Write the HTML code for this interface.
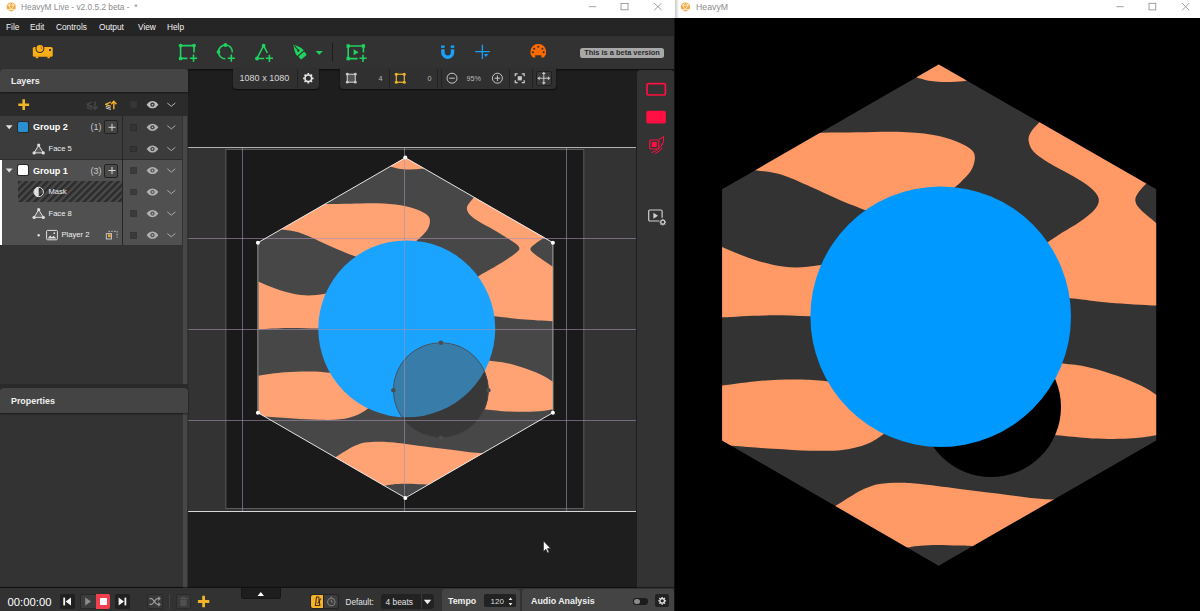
<!DOCTYPE html>
<html><head><meta charset="utf-8"><title>HeavyM</title>
<style>
*{box-sizing:border-box;margin:0;padding:0}
html,body{width:1200px;height:611px;overflow:hidden;background:#000;font-family:"Liberation Sans",sans-serif;font-size:9px;color:#e8e8e8}
.abs{position:absolute}
#left{position:absolute;left:0;top:0;width:675px;height:611px;background:#1e1e1e;overflow:hidden}
#right{position:absolute;left:675px;top:0;width:525px;height:611px;background:#000;overflow:hidden}
.titlebar{position:absolute;left:0;top:0;right:0;height:18px;background:#fff;color:#8c8c8c;font-size:9.5px;line-height:14px}
.menubar{position:absolute;left:0;top:18px;width:675px;height:18px;background:#252525;color:#f2f2f2;font-size:8.3px;line-height:18px}
.menubar span{position:absolute;top:0px}
.toolbar{position:absolute;left:0;top:36px;width:675px;height:33px;background:#323232;box-shadow:0 1px 2px rgba(0,0,0,.6)}
.panelhead{position:absolute;left:0;background:#444;border-radius:4px 4px 0 0;color:#f0f0f0;font-weight:bold;font-size:8.9px;width:188px;height:23px;line-height:24.5px;padding-left:11px;box-shadow:0 1px 2px rgba(0,0,0,.5)}
.t{position:absolute;white-space:nowrap;line-height:12px}
.b{font-weight:bold}
.nx{transform:scaleX(0.9);transform-origin:0 50%}
.row{position:absolute;left:0;width:182px}
.cb{position:absolute;width:6.9px;height:6.9px;background:#343434;border:1px solid #2d2d2d;left:130.1px}
.addb{position:absolute;left:104.2px;width:14.2px;height:14.2px;background:#444;border:1px solid #222;border-radius:2px}
.btn{position:absolute;border-radius:2px}
</style></head><body>
<div id="left">
  <div class="abs" id="canvas" style="left:188px;top:69px;width:448px;height:518px;background:#1e1e1e"></div>

<svg class="abs" style="left:0;top:0" width="675" height="611" viewBox="0 0 675 611">
  <defs>
    <clipPath id="hexc"><polygon points="938.7,64.5 1156.2,189.3 1156.2,440.5 938.7,565.8 722.1,440.5 722.1,189.3"/></clipPath>
    <clipPath id="bluec"><circle cx="940.7" cy="316.7" r="130.3"/></clipPath>
    <g id="art">
      <polygon points="938.7,64.5 1156.2,189.3 1156.2,440.5 938.7,565.8 722.1,440.5 722.1,189.3" fill="#333"/>
      <g clip-path="url(#hexc)" fill="#ff9966">
<path d="M900,50 L916.7,77.5 C918.8,78.0 924.8,80.1 929.0,80.8 C933.2,81.5 937.4,81.7 941.7,81.9 C946.0,82.1 950.8,82.0 955.0,81.8 C959.2,81.6 964.8,80.9 966.8,80.7 L990,50 Z"/>
<path d="M740,150 L740.0,168.5 C742.8,168.8 750.2,169.4 757.0,170.4 C763.8,171.4 772.1,171.9 781.0,174.6 C789.9,177.3 801.1,182.7 810.5,186.8 C819.9,190.9 828.7,195.3 837.5,199.1 C846.3,202.9 852.9,205.6 863.3,209.4 C873.7,213.2 893.9,219.9 900.0,222.0 L940.0,200.0 C942.5,197.8 951.6,190.1 955.2,187.0 C958.8,183.9 958.7,184.2 961.4,181.4 C964.1,178.6 969.0,174.2 971.2,170.3 C973.5,166.4 974.9,161.6 974.9,158.1 C974.9,154.6 974.3,152.3 971.2,149.5 C968.1,146.7 963.0,143.9 956.5,141.4 C950.0,138.9 941.7,136.3 931.9,134.7 C922.1,133.1 909.8,132.2 897.5,131.8 C885.2,131.4 870.9,132.1 858.2,132.3 C845.5,132.5 832.8,132.6 821.4,132.8 C810.0,133.0 795.2,133.4 790.0,133.5 Z"/>
<path d="M700,236 L700.0,236.0 C703.7,237.8 713.9,243.3 722.1,247.0 C730.3,250.7 740.4,255.0 749.0,258.0 C757.6,261.0 765.9,263.4 773.7,265.0 C781.5,266.6 788.0,267.4 795.8,267.4 C803.6,267.4 811.3,266.6 820.3,265.0 C829.3,263.4 845.0,259.2 850.0,258.0 L850.0,318.0 C843.3,317.7 824.0,316.7 810.0,316.3 C796.0,315.9 780.9,315.2 766.3,315.4 C751.6,315.6 733.1,316.8 722.1,317.3 C711.1,317.8 703.7,318.3 700.0,318.5 Z"/>
<path d="M700,388.5 L700.0,388.5 C703.7,388.0 711.9,386.9 722.1,385.6 C732.3,384.3 748.7,381.7 761.4,380.7 C774.1,379.7 787.4,379.4 798.2,379.5 C809.1,379.6 816.2,380.3 826.5,381.2 C836.8,382.1 854.4,384.4 860.0,385.0 L900.0,420.0 C897.2,422.4 888.5,430.5 883.0,434.5 C877.5,438.5 873.8,441.3 867.0,443.9 C860.2,446.5 851.8,448.9 842.4,450.0 C833.0,451.1 822.0,450.9 810.5,450.7 C799.0,450.5 786.8,449.6 773.7,448.8 C760.6,448.0 744.2,446.8 731.9,445.8 C719.6,444.8 705.3,443.5 700.0,443.0 Z"/>
<path d="M820,516 L820.0,516.0 C822.6,514.3 830.2,509.1 835.6,505.7 C841.0,502.3 847.4,498.2 852.3,495.4 C857.2,492.5 860.5,490.5 865.0,488.6 C869.5,486.7 873.6,485.1 879.3,484.1 C884.9,483.1 892.3,482.9 898.9,482.8 C905.5,482.8 908.8,482.8 918.6,483.8 C928.4,484.8 944.8,487.1 957.9,488.7 C971.0,490.3 985.1,492.1 997.2,493.6 C1009.3,495.1 1021.1,496.9 1030.5,497.9 C1039.9,498.9 1046.4,499.1 1053.8,499.6 C1061.2,500.1 1071.5,500.8 1075.0,501.0 L1000,560 L1000.0,547.5 C995.6,547.3 980.6,546.5 973.6,546.2 C966.6,545.9 963.8,545.8 957.9,545.6 C952.0,545.4 944.5,545.0 938.2,545.0 C931.9,545.0 925.1,545.4 920.0,545.8 C914.9,546.2 914.5,546.4 907.8,547.6 C901.1,548.8 884.6,552.1 880.0,553.0 Z"/>
<path d="M1040,362 L1040.0,362.0 C1043.8,362.3 1054.8,362.7 1062.9,363.6 C1071.0,364.5 1079.2,365.1 1088.4,367.2 C1097.6,369.3 1109.1,372.9 1117.9,376.0 C1126.8,379.1 1135.1,382.7 1141.5,385.8 C1147.9,388.9 1150.6,391.2 1156.2,394.7 C1161.8,398.2 1171.9,404.9 1175.0,407.0 L1175.0,430.5 C1171.9,431.3 1163.9,433.8 1156.2,435.2 C1148.5,436.6 1139.4,438.1 1128.7,438.6 C1118.0,439.1 1103.9,438.9 1091.9,438.4 C1080.0,437.8 1065.7,436.0 1057.0,435.3 C1048.3,434.6 1042.8,434.2 1040.0,434.0 Z"/>
      </g>
    </g>
    <pattern id="hatch" width="5" height="5" patternUnits="userSpaceOnUse" patternTransform="rotate(-45)"><rect width="5" height="5" fill="#4a4a4a"/><rect width="5" height="2.6" fill="#2c2c2c"/></pattern>
  </defs>
  <!-- stage band -->
  <rect x="188.2" y="148" width="447.8" height="363" fill="#333"/>
  <rect x="225.8" y="149.5" width="358" height="359" fill="#1a1a1a" stroke="#5a5a5a" stroke-width="1"/>
  <rect x="188.2" y="147" width="447.8" height="1" fill="#b0b0b0"/>
  <rect x="188.2" y="511" width="447.8" height="1" fill="#d8d8d8"/>
  <g transform="translate(405.4,327.8) scale(0.679) translate(-938.7,-315.15)">
    <use href="#art"/>
    <path d="M1050,110 L1050.0,110.0 C1048.2,112.2 1042.2,119.5 1039.1,123.5 C1036.0,127.5 1032.8,130.8 1031.2,133.7 C1029.6,136.6 1028.9,138.3 1029.4,140.9 C1029.9,143.5 1031.3,146.3 1034.3,149.3 C1037.3,152.3 1041.7,155.4 1047.5,159.0 C1053.3,162.6 1062.0,166.8 1069.2,171.0 C1076.5,175.2 1085.3,180.6 1091.0,184.2 C1096.7,187.8 1100.5,190.4 1103.1,192.8 C1105.7,195.2 1106.8,196.8 1106.6,198.8 C1106.4,200.8 1105.1,202.0 1101.7,204.8 C1098.3,207.6 1092.7,211.4 1086.1,215.6 C1079.5,219.8 1068.4,226.4 1062.0,230.2 C1055.6,234.0 1057.8,232.3 1047.5,238.6 C1037.2,244.9 1007.9,263.1 1000.0,268.0 L1000.0,293.0 C1011.6,293.9 1051.3,296.6 1069.6,298.2 C1087.9,299.8 1095.1,301.5 1109.6,302.7 C1124.0,303.9 1144.6,305.0 1156.3,305.6 C1168.0,306.2 1176.0,306.4 1180.0,306.5 L1180.0,243.0 C1176.0,240.1 1162.7,230.1 1156.3,225.5 C1149.9,220.9 1146.2,218.8 1141.6,215.6 C1136.9,212.3 1131.5,208.8 1128.4,206.0 C1125.3,203.2 1122.6,201.2 1122.8,198.8 C1123.0,196.4 1126.3,194.2 1129.6,191.6 C1132.9,189.0 1137.7,186.3 1142.8,183.0 C1147.9,179.7 1157.1,173.8 1160.0,172.0 L1100,100 Z" fill="#ff9966" clip-path="url(#hexc)"/>
    <circle cx="991" cy="407" r="70" fill="#1a1a1a"/>
    <circle cx="940.7" cy="316.7" r="130.3" fill="#0099ff"/>
    <polygon points="938.7,64.5 1156.2,189.3 1156.2,440.5 938.7,565.8 722.1,440.5 722.1,189.3" fill="#fff" fill-opacity="0.1"/>
    <circle cx="991" cy="407" r="70" fill="#383838"/>
    <circle cx="991" cy="407" r="70" fill="#387caa" clip-path="url(#bluec)"/>
    <circle cx="991" cy="407" r="70" fill="none" stroke="#4a4a4a" stroke-width="1"/>
    <g fill="#4c4c4c"><circle cx="991" cy="337" r="3.3"/><circle cx="991" cy="477" r="3.3"/><circle cx="921" cy="407" r="3.3"/><circle cx="1061" cy="407" r="3.3"/></g>
  </g>
  <!-- guides -->
  <g fill="#a48fb0" fill-opacity="0.6">
    <rect x="188.2" y="238" width="447.8" height="1"/><rect x="188.2" y="329" width="447.8" height="1"/><rect x="188.2" y="420" width="447.8" height="1"/>
    <rect x="242" y="148" width="1" height="363"/><rect x="404" y="148" width="1" height="363"/><rect x="566" y="148" width="1" height="363"/>
  </g>
  <!-- hexagon outline -->
  <path d="M257.9,242.7 L405.4,157.7 L552.9,242.7 M552.9,412.7 L405.4,497.9 L257.9,412.7" fill="none" stroke="#ececec" stroke-width="0.95"/>
  <path d="M552.9,242.7 V412.7 M257.9,242.7 V412.7" fill="none" stroke="#a0a0a0" stroke-width="1"/>
  <g fill="#fff"><circle cx="405.3" cy="157.5" r="2"/><circle cx="552.9" cy="242.7" r="2"/><circle cx="552.9" cy="412.7" r="2"/><circle cx="405.3" cy="497.9" r="2"/><circle cx="257.9" cy="412.7" r="2"/><circle cx="257.9" cy="242.7" r="2"/></g>
  <!-- cursor -->
  <path d="M543.5,541 l0,10.5 l2.4,-2.3 l1.7,3.8 l1.5,-0.7 l-1.7,-3.7 l3.3,0 Z" fill="#fff" stroke="#222" stroke-width="0.6"/>
</svg>

  <div class="titlebar"><span class="t" style="left:21px;top:0.8px;transform:scaleX(0.875);transform-origin:0 0">HeavyM Live - v2.0.5.2 beta -&nbsp; *</span></div>
  <div class="menubar"><span style="left:6px">File</span><span style="left:30px">Edit</span><span style="left:56px">Controls</span><span style="left:99px">Output</span><span style="left:138px">View</span><span style="left:167px">Help</span></div>
  <div class="toolbar"></div>
  <div class="abs" style="left:580px;top:47.5px;width:84px;height:10.5px;background:#a8a8a8;border-radius:2.5px;color:#2a2a2a;font-weight:bold;font-size:7.45px;line-height:10.5px;text-align:center;white-space:nowrap">This is a beta version</div>
  <!-- canvas tool boxes -->
  <div class="abs" style="left:232.5px;top:68px;width:86px;height:20.5px;background:#303030;border-radius:0 0 4px 4px;box-shadow:0 1px 2px rgba(0,0,0,.6)"></div>
  <div class="abs" style="left:297px;top:69px;width:1px;height:19px;background:#222"></div>
  <span class="t" style="left:239.5px;top:72px;color:#d8d8d8;font-size:9.05px">1080 x 1080</span>
  <div class="abs" style="left:340px;top:68px;width:216px;height:20.5px;background:#303030;border-radius:0 0 4px 4px;box-shadow:0 1px 2px rgba(0,0,0,.6)"></div>
  <div class="abs" style="left:389px;top:69px;width:1px;height:19px;background:#222"></div>
  <div class="abs" style="left:437px;top:69px;width:1px;height:19px;background:#222"></div>
  <div class="abs" style="left:441px;top:69px;width:1px;height:19px;background:#222"></div>
  <div class="abs" style="left:508.5px;top:69px;width:1px;height:19px;background:#222"></div>
  <div class="abs" style="left:531.5px;top:69px;width:1px;height:19px;background:#222"></div>
  <div class="abs" style="left:536px;top:70.5px;width:15.5px;height:15.5px;background:#3a3a3a;border:1px solid #202020;border-radius:2px"></div>
  <span class="t" style="left:378.5px;top:73px;color:#bbb;font-size:7.2px">4</span>
  <span class="t" style="left:427.5px;top:73px;color:#bbb;font-size:7.2px">0</span>
  <span class="t" style="left:466.5px;top:73px;color:#bbb;font-size:7.2px">95%</span>
  <!-- left panel -->
  <div class="abs" style="left:0;top:69px;width:188px;height:518px;background:#333"></div>
  <div class="abs" style="left:183px;top:116px;width:4.2px;height:268px;background:#474747"></div>
  <div class="abs" style="left:0;top:384px;width:188px;height:4.5px;background:#2a2a2a"></div>
  <div class="abs" style="left:183px;top:412.7px;width:4.2px;height:175px;background:#474747"></div>
  <div class="row" style="top:92px;height:24.3px;width:188px;background:#2b2b2b"></div>
  <div class="row" style="top:116.3px;height:43.2px;background:#3c3c3c"></div>
  <div class="row" style="top:159.6px;height:85.6px;background:#505050"></div>
  <div class="abs" style="left:0;top:159.6px;width:2.2px;height:85.6px;background:#fff"></div>
  <div class="abs" style="left:0;top:159.1px;width:182px;height:1px;background:#2c2c2c"></div>
  <div class="abs" style="left:122px;top:116.3px;width:1px;height:129px;background:#262626"></div>
  <div class="panelhead" style="top:69px">Layers</div>
  <div class="panelhead" style="top:388.3px;height:24.4px;line-height:27px">Properties</div>
  <div class="addb" style="top:120.3px"></div>
  <div class="addb" style="top:163.5px;background:#4a4a4a"></div>
  <div class="cb" style="top:101px;background:#363636;border-color:#333"></div>
  <div class="cb" style="top:123.8px"></div><div class="cb" style="top:145.5px"></div>
  <div class="cb" style="top:167px;background:#3b3b3b;border-color:#383838"></div><div class="cb" style="top:188.5px;background:#3b3b3b;border-color:#383838"></div><div class="cb" style="top:210px;background:#3b3b3b;border-color:#383838"></div><div class="cb" style="top:231.7px;background:#3b3b3b;border-color:#383838"></div>
  <div class="abs" style="left:17.8px;top:122px;width:10.4px;height:10px;background:#2a8fd0;border-radius:1.5px;box-shadow:0 0 0 1px #2a2a2a"></div>
  <div class="abs" style="left:17.8px;top:165.3px;width:10.4px;height:10px;background:#fff;border-radius:1.5px;box-shadow:0 0 0 1px #2a2a2a"></div>
  <span class="t b" style="left:33px;top:121.3px;color:#fff;font-size:9.1px">Group 2</span>
  <span class="t" style="left:90.5px;top:121.3px;color:#c8c8c8;font-size:9px">(1)</span>
  <span class="t" style="left:48.5px;top:143px;color:#f0f0f0;font-size:7.6px">Face 5</span>
  <span class="t b" style="left:33px;top:164.5px;color:#fff;font-size:9.1px">Group 1</span>
  <span class="t" style="left:90.5px;top:164.5px;color:#c8c8c8;font-size:9px">(3)</span>
  <svg class="abs" style="left:18px;top:180.8px" width="104" height="21.6"><rect width="104" height="21.6" fill="url(#hatch)"/><rect y="21" width="104" height="0.8" fill="#2a2a2a"/></svg>
  <span class="t" style="left:48.5px;top:186px;color:#f0f0f0;font-size:7.6px">Mask</span>
  <span class="t" style="left:48.5px;top:207.6px;color:#f0f0f0;font-size:7.6px">Face 8</span>
  <span class="t" style="left:61.5px;top:229.2px;color:#f0f0f0;font-size:7.6px">Player 2</span>
  <!-- right strip -->
  <div class="abs" style="left:636.6px;top:69.6px;width:37.4px;height:518px;background:#333;border-radius:4px 4px 0 0"></div>
  <!-- bottom bar -->
  <div class="abs" style="left:0;top:587.6px;width:675px;height:24px;background:#323232;box-shadow:0 -1px 1px rgba(0,0,0,.45)"></div>
  <div class="abs" style="left:241px;top:587.6px;width:40px;height:11.2px;background:#1e1e1e;border-radius:0 0 3px 3px;border:1px solid #161616;border-top:none"></div>
  <div class="abs" style="left:442px;top:589px;width:78px;height:22px;background:#444;border-radius:3px 3px 0 0"></div>
  <div class="abs" style="left:521.5px;top:589px;width:152.3px;height:22px;background:#444;border-radius:3px 3px 0 0"></div>
  <span class="t" style="left:7.5px;top:595.5px;color:#fff;font-size:11.3px">00:00:00</span>
  <div class="btn" style="left:59.5px;top:594px;width:15px;height:15px;background:#202020"></div>
  <div class="btn" style="left:79.5px;top:594px;width:16.5px;height:15px;background:#3c3c3c;border-radius:2px 0 0 2px;border:1px solid #282828;border-right:none"></div>
  <div class="btn" style="left:96px;top:594px;width:14.3px;height:15px;background:#f0404f;border-radius:0 2px 2px 0"></div>
  <div class="abs" style="left:99.5px;top:597.8px;width:7.4px;height:7.4px;background:#fff;border-radius:0.8px"></div>
  <div class="btn" style="left:115px;top:594px;width:15.3px;height:15px;background:#202020"></div>
  <div class="btn" style="left:146.5px;top:594px;width:16px;height:15px;background:#393939;border:1px solid #2a2a2a"></div>
  <div class="abs" style="left:168.5px;top:594px;width:1px;height:15px;background:#444"></div>
  <div class="btn" style="left:176px;top:594px;width:15px;height:15px;background:#393939;border:1px solid #2a2a2a"></div>
  <div class="btn" style="left:311px;top:594.5px;width:13.3px;height:13.5px;background:#f5b32a;box-shadow:0 0 0 1px #222;border-radius:2px 0 0 2px"></div>
  <div class="btn" style="left:324.3px;top:594.5px;width:14.2px;height:13.5px;background:#3c3c3c;box-shadow:0 0 0 1px #222;border-radius:0 2px 2px 0"></div>
  <span class="t" style="left:345.5px;top:596.5px;color:#e4e4e4;font-size:8.2px">Default:</span>
  <div class="btn" style="left:380.5px;top:594px;width:53px;height:14.5px;background:#222;border-radius:3px"></div>
  <div class="abs" style="left:420.5px;top:594px;width:1px;height:14.5px;background:#3a3a3a"></div>
  <span class="t" style="left:385.5px;top:596px;color:#e4e4e4;font-size:8.4px">4 beats</span>
  <span class="t b" style="left:448px;top:595px;color:#f0f0f0;font-size:8.8px">Tempo</span>
  <div class="btn" style="left:484.3px;top:594.3px;width:31.3px;height:13px;background:#222"></div>
  <span class="t" style="left:490.5px;top:595.5px;color:#ddd;font-size:8px">120</span>
  <span class="t b" style="left:531px;top:595px;color:#f0f0f0;font-size:8.86px">Audio Analysis</span>
  <div class="abs" style="left:633.3px;top:598.2px;width:14.5px;height:6.6px;background:#1c1c1c;border-radius:3.3px"></div>
  <div class="abs" style="left:634px;top:598.7px;width:5.6px;height:5.6px;background:#8a8a8a;border-radius:3px"></div>
  <div class="btn" style="left:655.4px;top:594.3px;width:13.6px;height:13px;background:#222"></div>

<svg class="abs" style="left:0;top:0" width="675" height="611" viewBox="0 0 675 611">
  <!-- title icon + window controls -->
  <g transform="translate(11.2,6.8)"><polygon points="0,-5 4.4,-2.5 4.4,2.5 0,5 -4.4,2.5 -4.4,-2.5" fill="#f5a63a"/><path d="M-2.6,-1.6 L2.6,-1.6 L0,3 Z M0,-5 L-2.6,-1.6 M0,-5 L2.6,-1.6 M4.4,2.5 L0,3 M-4.4,2.5 L0,3 M-4.4,-2.5 L-2.6,-1.6 M4.4,-2.5 L2.6,-1.6" stroke="#fff" stroke-width="0.7" fill="none"/></g>
  <g stroke="#8a8a8a" stroke-width="0.8" fill="none">
    <path d="M589,6.7 h7.2"/><rect x="621" y="3.4" width="7" height="6.4"/><path d="M654.2,3.2 l7.4,7 M661.6,3.2 l-7.4,7"/>
  </g>
  <!-- projector -->
  <g fill="#fcae16">
    <rect x="32.8" y="47" width="19.9" height="9.8" rx="1.6"/><rect x="35.8" y="56.4" width="2.4" height="1.8"/><rect x="47.4" y="56.4" width="2.4" height="1.8"/>
  </g>
  <circle cx="39.9" cy="48.5" r="4.5" fill="#323232"/>
  <circle cx="39.9" cy="48.5" r="3.4" fill="#fcae16"/>
  <path d="M40.6,46.6 q1.3,1 0.9,2.6" stroke="#7a5208" stroke-width="0.6" fill="none"/>
  <rect x="49.1" y="49.1" width="1.9" height="1.9" fill="#323232"/>
  <!-- green tools -->
  <g stroke="#1fd35f" stroke-width="1.6" fill="none">
    <path d="M194,52.4 V45.6 H180.6 V58.4 H187.4"/>
    <path d="M189.9,58.2 h7.2 M193.5,54.6 v7.2"/>
    <path d="M232.3,52.4 A6.9,6.9 0 1 0 225.4,58.8"/>
    <path d="M227.7,58.2 h7.2 M231.3,54.6 v7.2"/>
    <path d="M267.4,53 L263.6,45.7 L257,58.5 H264.2"/>
    <path d="M265.8,58.3 h7.2 M269.4,54.7 v7.2"/>
    <path d="M363.4,52.6 V46 H348.2 V58.6 H357.6"/>
    <path d="M359.4,58.3 h7.2 M363,54.7 v7.2"/>
  </g>
  <g fill="#1fd35f">
    <circle cx="180.6" cy="45.6" r="1.9"/><circle cx="194" cy="45.6" r="1.9"/><circle cx="180.6" cy="58.4" r="1.9"/>
    <circle cx="225.4" cy="45" r="1.9"/><circle cx="218.5" cy="51.9" r="1.9"/>
    <circle cx="263.6" cy="45.7" r="1.9"/><circle cx="257" cy="58.5" r="1.9"/>
    <rect x="346.5" y="44.3" width="3.4" height="3.4"/><rect x="361.7" y="44.3" width="3.4" height="3.4"/><rect x="346.5" y="56.9" width="3.4" height="3.4"/>
    <path d="M353.6,49.2 l5,3 l-5,3 Z"/>
    <!-- pen -->
    <g transform="translate(299.6,52) rotate(-40) scale(1.2)"><path d="M0,-8 C2.2,-4.5 3.6,-2 3.6,1.2 L-3.6,1.2 C-3.6,-2 -2.2,-4.5 0,-8 Z"/><rect x="-3.2" y="2.2" width="6.4" height="3.4" rx="0.6"/></g>
    <path d="M315.6,51 h7.2 l-3.6,3.8 Z"/>
  </g>
  <g transform="translate(299.6,52) rotate(-40) scale(1.2)"><path d="M0,-7 v5" stroke="#323232" stroke-width="0.9"/><circle cx="0" cy="-1.6" r="1" fill="#323232"/></g>
  <rect x="332" y="43" width="1" height="18.5" fill="#1c1c1c"/>
  <!-- magnet -->
  <path d="M442.9,45.4 v7 a4.8,4.8 0 0 0 9.6,0 v-7" fill="none" stroke="#18a0fb" stroke-width="3.5"/>
  <rect x="440.5" y="47.9" width="14.5" height="1.4" fill="#323232"/>
  <!-- cross -->
  <path d="M475.3,51.7 h14.5 M482.4,44.7 v14.2" stroke="#18a0fb" stroke-width="1.3" fill="none"/>
  <path d="M484,54 h4.4 l-2.6,3 Z" fill="#18a0fb"/>
  <!-- midi -->
  <path d="M538.3,44 a7.8,7.8 0 0 1 5.3,13.5 l-2.2,0 l0,-2.2 l-6.2,0 l0,2.2 l-2.2,0 A7.8,7.8 0 0 1 538.3,44 Z" fill="#ff6a00"/>
  <g fill="#323232"><circle cx="538.3" cy="46.8" r="1.05"/><circle cx="534.2" cy="48.8" r="1.05"/><circle cx="542.4" cy="48.8" r="1.05"/><circle cx="532.9" cy="52.3" r="1.05"/><circle cx="543.7" cy="52.3" r="1.05"/></g>
  <!-- gear 1080 -->
  <g transform="translate(308.3,78.3)"><circle r="3.3" fill="none" stroke="#e6e6e6" stroke-width="1.6"/><g stroke="#e6e6e6" stroke-width="1.7"><path d="M0,-5.2 v1.6 M0,5.2 v-1.6 M-5.2,0 h1.6 M5.2,0 h-1.6 M-3.7,-3.7 l1.1,1.1 M3.7,3.7 l-1.1,-1.1 M-3.7,3.7 l1.1,-1.1 M3.7,-3.7 l-1.1,1.1"/></g></g>
  <!-- grid icons -->
  <g transform="translate(351.3,78.2)"><rect x="-4" y="-4" width="8" height="8" fill="#555" stroke="#c8c8c8" stroke-width="1.1"/><g fill="#c8c8c8"><circle cx="-4" cy="-4" r="1.4"/><circle cx="4" cy="-4" r="1.4"/><circle cx="-4" cy="4" r="1.4"/><circle cx="4" cy="4" r="1.4"/></g></g>
  <g transform="translate(400.3,78.2)"><rect x="-4" y="-4" width="8" height="8" fill="none" stroke="#f0b428" stroke-width="1.2"/><g fill="#f0b428"><circle cx="-4" cy="-4" r="1.5"/><circle cx="4" cy="-4" r="1.5"/><circle cx="-4" cy="4" r="1.5"/><circle cx="4" cy="4" r="1.5"/></g></g>
  <!-- zoom -->
  <g stroke="#c8c8c8" stroke-width="1" fill="none">
    <circle cx="452" cy="78.2" r="5"/><path d="M449.2,78.2 h5.6"/>
    <circle cx="497.4" cy="78.2" r="5"/><path d="M494.6,78.2 h5.6 M497.4,75.4 v5.6"/>
    <path d="M515.3,76.2 v-2.4 h2.4 M521.8,73.8 h2.4 v2.4 M524.2,80.2 v2.4 h-2.4 M517.7,82.6 h-2.4 v-2.4" stroke-width="1.3"/>
    <path d="M538.5,78.2 h10.6 M543.8,72.9 v10.6" stroke-width="1"/>
  </g>
  <rect x="517.7" y="76.2" width="4.2" height="4.2" fill="#c8c8c8"/>
  <g fill="#c8c8c8"><path d="M537.3,78.2 l2.4,-2 v4 Z M550.3,78.2 l-2.4,-2 v4 Z M543.8,71.7 l-2,2.4 h4 Z M543.8,84.7 l-2,-2.4 h4 Z"/></g>
  <!-- layers toolbar -->
  <path d="M18.3,104.7 h10.8 M23.7,99.3 v10.8" stroke="#f0b428" stroke-width="2.6" fill="none"/>
  <g stroke="#484848" fill="none" stroke-linejoin="round"><path d="M92,102 L86.8,104.3 L92,106.3" stroke-width="1.3"/><path d="M87,106.3 L92,108.1 M87,107.9 L92,109.6" stroke-width="1"/><path d="M95,101.3 V108.6" stroke-width="1.4"/><path d="M92.4,106.4 L95,109.3 L97.6,106.4" stroke-width="1.4"/></g>
  <g fill="none" stroke-linejoin="round"><path d="M110.8,102 L105.6,104.3 L110.8,106.3" stroke="#f5b32a" stroke-width="1.3"/><path d="M105.8,106.3 L110.8,108.1 M105.8,107.9 L110.8,109.6" stroke="#c8c8c8" stroke-width="1"/><path d="M113.8,109.2 V102" stroke="#f5b32a" stroke-width="1.4"/><path d="M111.2,104.2 L113.8,101.3 L116.4,104.2" stroke="#f5b32a" stroke-width="1.4"/></g>
<g transform="translate(152.5,104.7)"><path d="M-5.9,0 C-3.8,-2.9 -1.7,-3.6 0,-3.6 C1.7,-3.6 3.8,-2.9 5.9,0 C3.8,2.9 1.7,3.6 0,3.6 C-1.7,3.6 -3.8,2.9 -5.9,0 Z" fill="#bdbdbd"/><circle r="2.1" fill="#2b2b2b"/><circle r="0.9" fill="#bdbdbd"/></g>
<path d="M167.3,103.0 l4,3.3 l4,-3.3" fill="none" stroke="#bdbdbd" stroke-width="0.95"/>
<g transform="translate(152.5,127.3)"><path d="M-5.9,0 C-3.8,-2.9 -1.7,-3.6 0,-3.6 C1.7,-3.6 3.8,-2.9 5.9,0 C3.8,2.9 1.7,3.6 0,3.6 C-1.7,3.6 -3.8,2.9 -5.9,0 Z" fill="#b0b0b0"/><circle r="2.1" fill="#3c3c3c"/><circle r="0.9" fill="#b0b0b0"/></g>
<path d="M167.3,125.6 l4,3.3 l4,-3.3" fill="none" stroke="#b0b0b0" stroke-width="0.95"/>
<g transform="translate(152.5,149)"><path d="M-5.9,0 C-3.8,-2.9 -1.7,-3.6 0,-3.6 C1.7,-3.6 3.8,-2.9 5.9,0 C3.8,2.9 1.7,3.6 0,3.6 C-1.7,3.6 -3.8,2.9 -5.9,0 Z" fill="#b0b0b0"/><circle r="2.1" fill="#3c3c3c"/><circle r="0.9" fill="#b0b0b0"/></g>
<path d="M167.3,147.3 l4,3.3 l4,-3.3" fill="none" stroke="#b0b0b0" stroke-width="0.95"/>
<g transform="translate(152.5,170.5)"><path d="M-5.9,0 C-3.8,-2.9 -1.7,-3.6 0,-3.6 C1.7,-3.6 3.8,-2.9 5.9,0 C3.8,2.9 1.7,3.6 0,3.6 C-1.7,3.6 -3.8,2.9 -5.9,0 Z" fill="#b0b0b0"/><circle r="2.1" fill="#505050"/><circle r="0.9" fill="#b0b0b0"/></g>
<path d="M167.3,168.8 l4,3.3 l4,-3.3" fill="none" stroke="#b0b0b0" stroke-width="0.95"/>
<g transform="translate(152.5,192)"><path d="M-5.9,0 C-3.8,-2.9 -1.7,-3.6 0,-3.6 C1.7,-3.6 3.8,-2.9 5.9,0 C3.8,2.9 1.7,3.6 0,3.6 C-1.7,3.6 -3.8,2.9 -5.9,0 Z" fill="#b0b0b0"/><circle r="2.1" fill="#505050"/><circle r="0.9" fill="#b0b0b0"/></g>
<path d="M167.3,190.3 l4,3.3 l4,-3.3" fill="none" stroke="#b0b0b0" stroke-width="0.95"/>
<g transform="translate(152.5,213.6)"><path d="M-5.9,0 C-3.8,-2.9 -1.7,-3.6 0,-3.6 C1.7,-3.6 3.8,-2.9 5.9,0 C3.8,2.9 1.7,3.6 0,3.6 C-1.7,3.6 -3.8,2.9 -5.9,0 Z" fill="#b0b0b0"/><circle r="2.1" fill="#505050"/><circle r="0.9" fill="#b0b0b0"/></g>
<path d="M167.3,211.9 l4,3.3 l4,-3.3" fill="none" stroke="#b0b0b0" stroke-width="0.95"/>
<g transform="translate(152.5,235.2)"><path d="M-5.9,0 C-3.8,-2.9 -1.7,-3.6 0,-3.6 C1.7,-3.6 3.8,-2.9 5.9,0 C3.8,2.9 1.7,3.6 0,3.6 C-1.7,3.6 -3.8,2.9 -5.9,0 Z" fill="#b0b0b0"/><circle r="2.1" fill="#505050"/><circle r="0.9" fill="#b0b0b0"/></g>
<path d="M167.3,233.5 l4,3.3 l4,-3.3" fill="none" stroke="#b0b0b0" stroke-width="0.95"/>
  <!-- triangles expand -->
  <path d="M5.8,125.3 h6.8 l-3.4,4 Z M5.8,168.5 h6.8 l-3.4,4 Z" fill="#e0e0e0"/>
  <path d="M108.5,127.3 h7 M112,123.8 v7 M108.5,170.5 h7 M112,167 v7" stroke="#d8d8d8" stroke-width="1" fill="none"/>
<g transform="translate(38.7,149.3)" stroke="#ddd" fill="none" stroke-width="1"><path d="M0,-4.2 L-4.6,3.6 L4.6,3.6 Z" fill="#777" fill-opacity="0.5"/><circle cx="0" cy="-4.2" r="1.6" fill="#ddd" stroke="none"/><circle cx="-4.6" cy="3.6" r="1.6" fill="#ddd" stroke="none"/><circle cx="4.6" cy="3.6" r="1.6" fill="#ddd" stroke="none"/></g>
<g transform="translate(38.7,213.8)" stroke="#ddd" fill="none" stroke-width="1"><path d="M0,-4.2 L-4.6,3.6 L4.6,3.6 Z" fill="#777" fill-opacity="0.5"/><circle cx="0" cy="-4.2" r="1.6" fill="#ddd" stroke="none"/><circle cx="-4.6" cy="3.6" r="1.6" fill="#ddd" stroke="none"/><circle cx="4.6" cy="3.6" r="1.6" fill="#ddd" stroke="none"/></g>
  <!-- mask icon -->
  <circle cx="38.7" cy="192" r="4.7" fill="none" stroke="#e0e0e0" stroke-width="1"/><path d="M38.7,187.3 a4.7,4.7 0 0 0 0,9.4 Z" fill="#e0e0e0"/>
  <!-- player row -->
  <circle cx="38.7" cy="235.3" r="1.2" fill="#e0e0e0"/>
  <rect x="46.6" y="230.4" width="10.8" height="9.4" rx="1" fill="none" stroke="#e0e0e0" stroke-width="1"/>
  <path d="M47.6,238.6 l2.6,-3.2 l1.8,1.8 l1.6,-1.4 l2.8,2.8 Z" fill="#e0e0e0"/><circle cx="54.3" cy="233.2" r="0.9" fill="#e0e0e0"/>
  <g><rect x="107.6" y="231.8" width="9.6" height="0" /><path d="M108.5,231.3 h8.6 v6.3" stroke="#d0d0d0" stroke-width="1" stroke-dasharray="1.4 1.4" fill="none"/><rect x="106.3" y="233.6" width="5.2" height="5.4" fill="none" stroke="#d0d0d0" stroke-width="0.9"/><rect x="108" y="234.3" width="2.8" height="2.8" fill="#f0a428"/></g>
  <!-- right strip icons -->
  <rect x="647" y="83.6" width="18.4" height="11.4" rx="1.8" fill="none" stroke="#ff0f42" stroke-width="1.7"/>
  <rect x="646.3" y="110.8" width="19.6" height="12.6" rx="2" fill="#ff0f42"/>
  <g stroke="#ff0f42" fill="none" stroke-width="1.2"><rect x="649.8" y="140" width="9" height="9" rx="1"/><rect x="652.4" y="142.6" width="3.8" height="3.8" fill="#ff0f42"/><path d="M658.8,139.5 q4,-1.5 4.8,-3.2 q0.8,6 -2.2,9.5 M651.5,152.6 q7,-2 11,-8.5 M655,153.6 q5,-2 7.4,-6" stroke-width="1"/></g>
  <g stroke="#d0d0d0" fill="none" stroke-width="1.2"><path d="M659.3,221 h-9.4 a1.2,1.2 0 0 1 -1.2,-1.2 v-8.6 a1.2,1.2 0 0 1 1.2,-1.2 h11 a1.2,1.2 0 0 1 1.2,1.2 v6.6" /><circle cx="662.8" cy="222.2" r="2"/><path d="M662.8,218.9 v1 M662.8,224.5 v1 M659.5,222.2 h1 M665.1,222.2 h1 M660.5,219.9 l.7,.7 M664.4,223.8 l.7,.7 M660.5,224.5 l.7,-.7 M664.4,220.6 l.7,-.7" stroke-width="1"/></g>
  <path d="M653.4,212.8 l4.6,3 l-4.6,3 Z" fill="#d0d0d0"/>
  <!-- bottom bar icons -->
  <g fill="#f4f4f4"><rect x="63.3" y="597.6" width="1.8" height="7.8"/><path d="M71,597.6 v7.8 l-5.4,-3.9 Z"/><path d="M118.6,597.6 v7.8 l5.4,-3.9 Z"/><rect x="124.5" y="597.6" width="1.8" height="7.8"/></g>
  <path d="M85.2,597.4 v8.2 l5.8,-4.1 Z" fill="#8c8c8c"/>
  <g stroke="#9a9a9a" stroke-width="1.1" fill="none"><path d="M149.5,598.6 h2 c2,0 3.6,5.8 5.8,5.8 h1.8 M149.5,604.4 h2 c2,0 3.6,-5.8 5.8,-5.8 h1.8"/><path d="M158.2,596.8 l1.8,1.8 l-1.8,1.8 M158.2,602.6 l1.8,1.8 l-1.8,1.8"/></g>
  <g fill="#505050"><rect x="180.3" y="599.6" width="6.4" height="6.4" rx="0.8"/><rect x="179.4" y="597.8" width="8.2" height="1.2"/><rect x="182" y="596.7" width="3" height="1.2"/></g>
  <path d="M197.9,601.5 h11.4 M203.6,595.8 v11.4" stroke="#f0b428" stroke-width="2.8" fill="none"/>
  <path d="M257.6,596 h6.4 l-3.2,-4 Z" fill="#fff"/>
  <g stroke="#4a2e06" stroke-width="1.1" fill="none"><path d="M315.4,605.5 l1.1,-8.5 h2.2 l1.1,8.5 Z"/><path d="M317.6,603.5 l3.2,-5"/></g>
  <g stroke="#8a8a8a" stroke-width="0.9" fill="none"><circle cx="331.3" cy="602" r="3.8"/><path d="M331.3,599.8 v2.2 h1.6 M330.3,597.2 h2"/></g>
  <path d="M423.8,599.8 h7.4 l-3.7,4.4 Z" fill="#f0f0f0"/>
  <path d="M508.6,600 h3.8 l-1.9,-2.4 Z M508.6,603 h3.8 l-1.9,2.4 Z" fill="#e8e8e8"/>
  <g transform="translate(662.2,600.8)"><circle r="2.3" fill="none" stroke="#e6e6e6" stroke-width="1.3"/><g stroke="#e6e6e6" stroke-width="1.3"><path d="M0,-3.9 v1.3 M0,3.9 v-1.3 M-3.9,0 h1.3 M3.9,0 h-1.3 M-2.8,-2.8 l.9,.9 M2.8,2.8 l-.9,-.9 M-2.8,2.8 l.9,-.9 M2.8,-2.8 l-.9,.9"/></g></g>
</svg>

  <div class="abs" style="left:674px;top:18px;width:1px;height:593px;background:#111"></div>
</div>
<div id="right">
  <div class="titlebar"><span class="t" style="left:20.5px;top:0.8px;transform:scaleX(0.92);transform-origin:0 0">HeavyM</span>
    <div class="abs" style="left:0;top:0;width:4px;height:18px;background:linear-gradient(90deg,#c8c8c8,#fff)"></div></div>
  <svg class="abs" style="left:0;top:0" width="525" height="611" viewBox="675 0 525 611">
    <use href="#art"/>
    <path d="M1050,110 L1050.0,110.0 C1048.2,112.1 1042.1,119.1 1038.9,122.8 C1035.7,126.5 1032.7,129.0 1031.0,131.9 C1029.3,134.8 1028.2,137.2 1028.6,140.5 C1029.0,143.8 1030.2,147.9 1033.5,151.6 C1036.8,155.3 1041.7,158.5 1048.2,162.6 C1054.8,166.7 1065.8,172.0 1072.8,176.1 C1079.8,180.2 1085.7,183.5 1090.0,187.2 C1094.3,190.9 1097.8,194.5 1098.6,198.2 C1099.4,201.9 1098.0,205.4 1094.9,209.3 C1091.8,213.2 1085.9,217.5 1080.2,221.6 C1074.5,225.7 1065.8,230.4 1060.5,233.8 C1055.2,237.2 1058.3,235.5 1048.2,241.9 C1038.1,248.3 1008.0,267.0 1000.0,272.0 L1000.0,293.0 C1011.6,293.9 1051.3,296.6 1069.6,298.2 C1087.9,299.8 1095.1,301.5 1109.6,302.7 C1124.0,303.9 1144.6,305.0 1156.3,305.6 C1168.0,306.2 1176.0,306.4 1180.0,306.5 L1180.0,246.0 C1176.0,242.2 1162.9,229.4 1156.3,223.3 C1149.7,217.2 1143.8,213.1 1140.3,209.3 C1136.8,205.5 1135.8,203.4 1135.4,200.7 C1135.0,198.0 1136.2,196.1 1137.9,193.3 C1139.6,190.6 1142.0,187.8 1145.7,184.2 C1149.4,180.6 1157.6,174.0 1160.0,172.0 L1100,100 Z" fill="#ff9966" clip-path="url(#hexc)"/>
    <circle cx="991" cy="407" r="70" fill="#000"/>
    <circle cx="940.7" cy="316.7" r="130.3" fill="#0099ff"/>
    <!-- title icons -->
    <g stroke="#8a8a8a" stroke-width="0.8" fill="none">
      <path d="M1116.5,6.7 h7.2"/><rect x="1149" y="3.3" width="6.8" height="6.6"/><path d="M1182.2,3.2 l7,7 M1189.2,3.2 l-7,7"/>
    </g>
    <g transform="translate(685.4,6.8)"><polygon points="0,-5 4.4,-2.5 4.4,2.5 0,5 -4.4,2.5 -4.4,-2.5" fill="#f5a63a"/><path d="M-2.6,-1.6 L2.6,-1.6 L0,3 Z M0,-5 L-2.6,-1.6 M0,-5 L2.6,-1.6 M4.4,2.5 L0,3 M-4.4,2.5 L0,3 M-4.4,-2.5 L-2.6,-1.6 M4.4,-2.5 L2.6,-1.6" stroke="#fff" stroke-width="0.7" fill="none"/></g>
  </svg>
</div>
</body></html>
